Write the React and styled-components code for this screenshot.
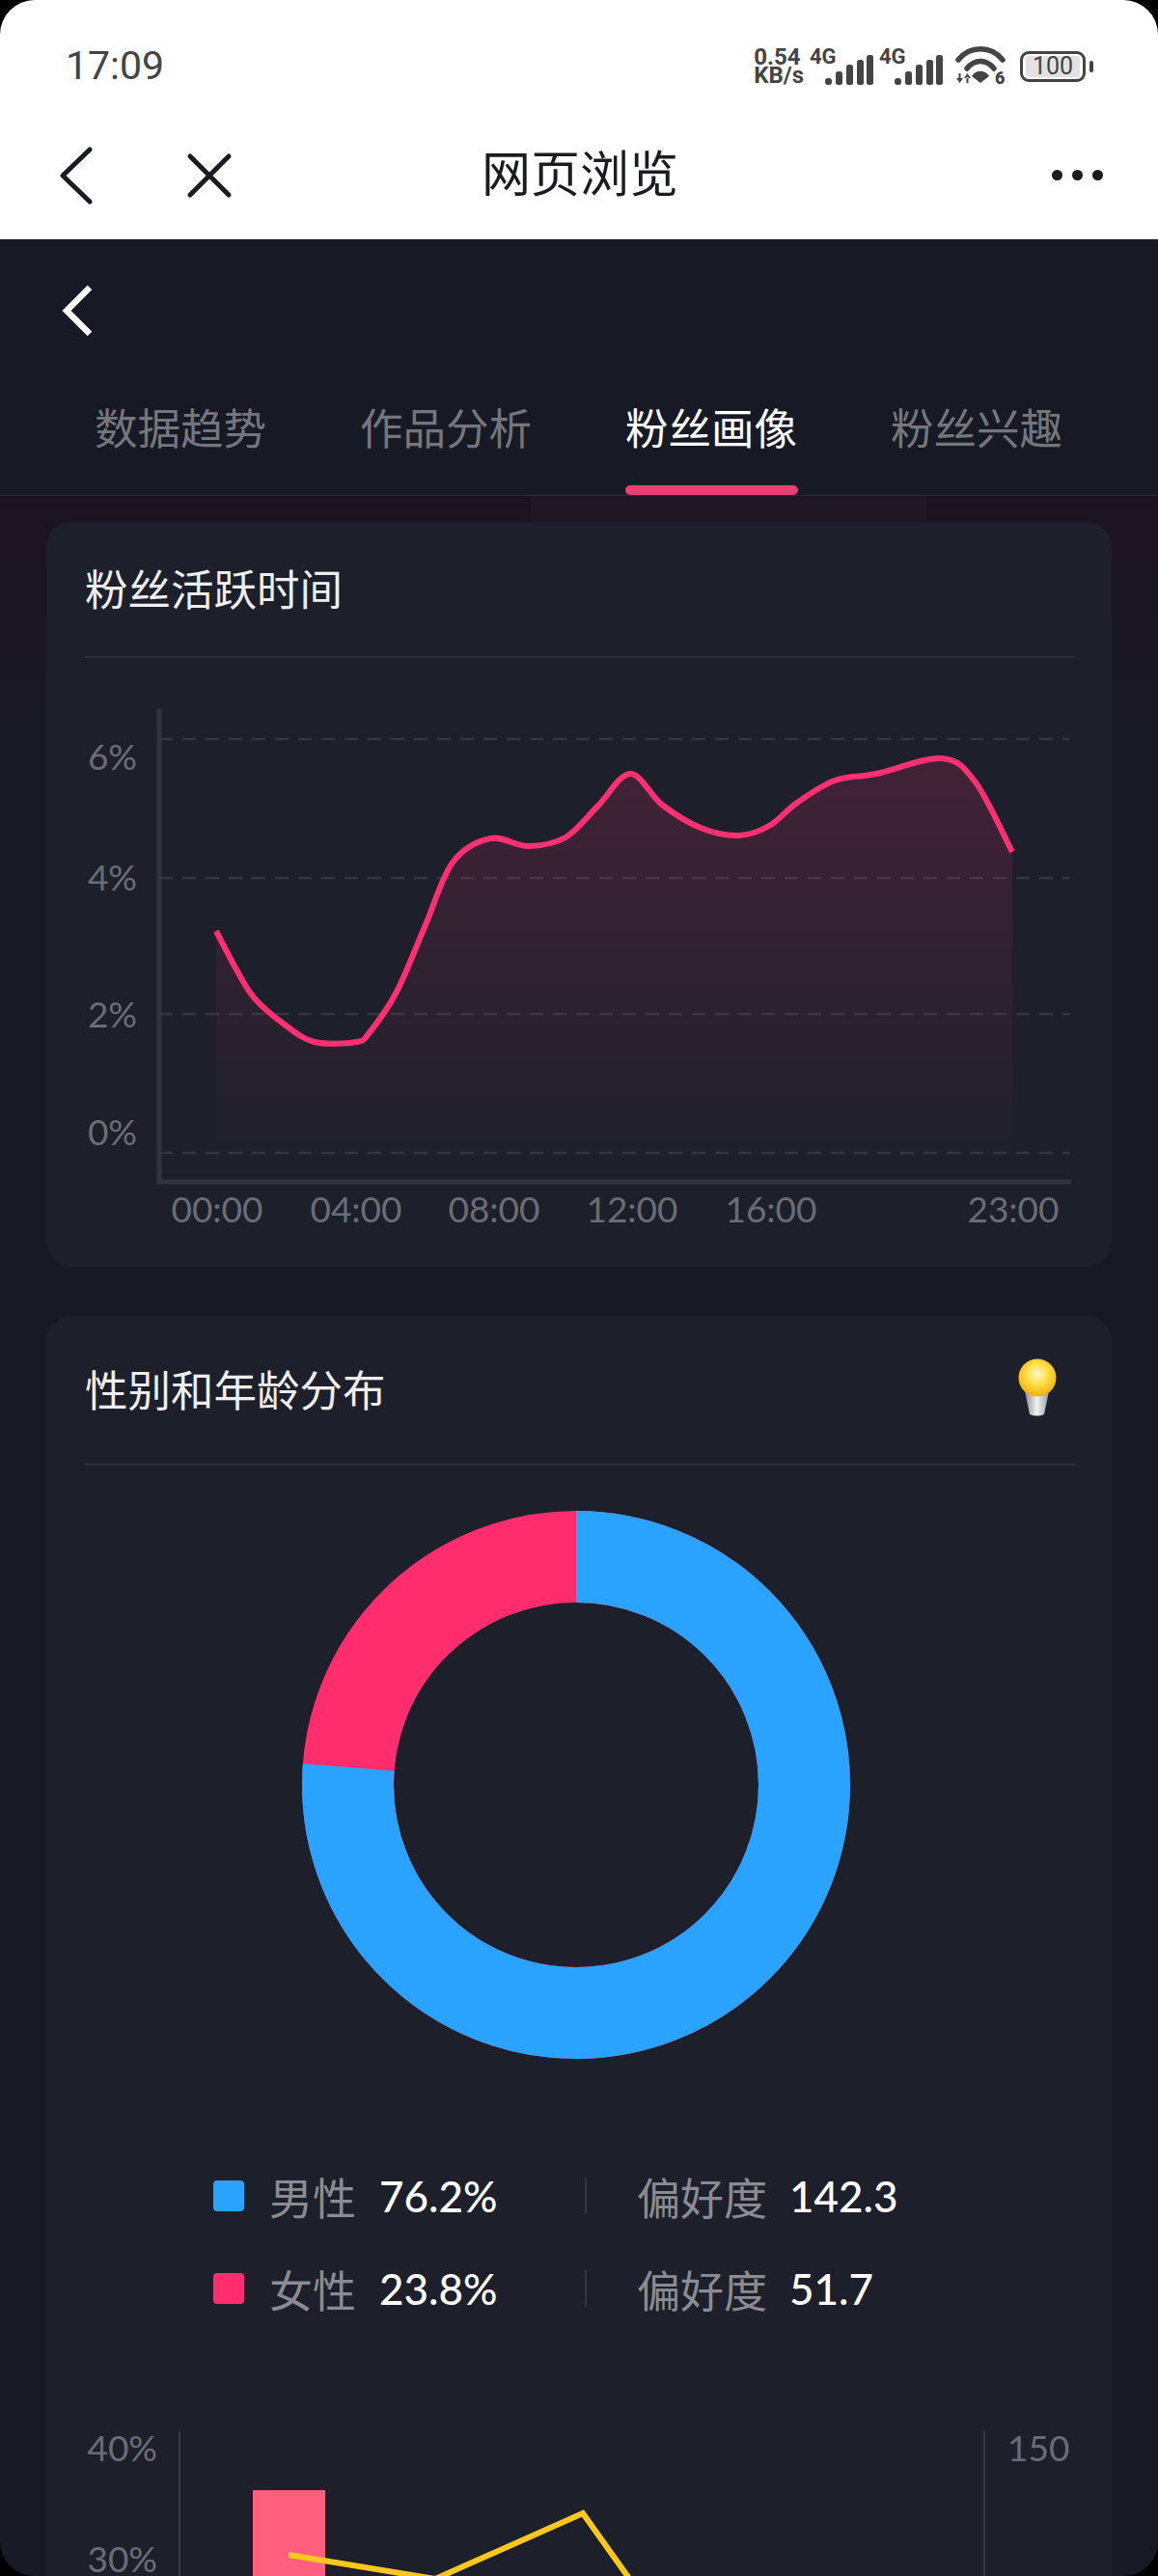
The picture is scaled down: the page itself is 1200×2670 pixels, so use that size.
import React from 'react'
import styled, { createGlobalStyle } from 'styled-components'

const FONT = `Lato, "Noto Sans CJK SC", "Noto Sans", sans-serif`

const GlobalStyle = createGlobalStyle`
    html, body {
        margin: 0;
        padding: 0;
        background: #000;
        font-family: ${FONT};
    }
`

const curvePoints = [
    [224, 965], [245, 1005], [264, 1035], [295, 1062], [326, 1080], [369, 1080], [383, 1070],
    [411, 1028], [440, 961], [469, 894], [508, 869], [547, 877], [586, 868],
    [619, 836], [653, 802], [686, 834], [726, 858], [765, 866], [797, 856],
    [826, 832], [865, 809], [908, 802], [976, 786], [1011, 811], [1049, 883],
]

// catmull-rom to bezier so the line stays smooth through every point
const smoothPath = (pts) => {
    let d = `M${pts[0][0]} ${pts[0][1]}`
    for (let i = 0; i < pts.length - 1; i++) {
        const p0 = pts[i - 1] || pts[i]
        const p1 = pts[i]
        const p2 = pts[i + 1]
        const p3 = pts[i + 2] || p2
        const c1x = p1[0] + (p2[0] - p0[0]) / 6
        const c1y = p1[1] + (p2[1] - p0[1]) / 6
        const c2x = p2[0] - (p3[0] - p1[0]) / 6
        const c2y = p2[1] - (p3[1] - p1[1]) / 6
        d += ` C${c1x} ${c1y} ${c2x} ${c2y} ${p2[0]} ${p2[1]}`
    }
    return d
}

const linePath = smoothPath(curvePoints)
const gridLines = [766, 910, 1051, 1195]
const yLabels = [['6%', 785], ['4%', 910], ['2%', 1052], ['0%', 1174]]
const xLabels = [['00:00', 225], ['04:00', 369], ['08:00', 512], ['12:00', 655], ['16:00', 799], ['23:00', 1050]]
const tabs = ['数据趋势', '作品分析', '粉丝画像', '粉丝兴趣']
const legendRows = [
    { color: '#2aa2ff', name: '男性', share: '76.2%', score: '142.3' },
    { color: '#ff2d6e', name: '女性', share: '23.8%', score: '51.7' },
]

function SignalIcon() {
    return (
        <svg width="50" height="31" viewBox="0 0 50 31" fill="#444">
            <rect x="0" y="24" width="7" height="7" rx="3" />
            <rect x="11" y="17" width="7" height="14" rx="2.5" />
            <rect x="22" y="10" width="7" height="21" rx="2.5" />
            <rect x="33" y="5" width="7" height="26" rx="2.5" />
            <rect x="43" y="0" width="7" height="31" rx="2.5" />
        </svg>
    )
}

function WifiIcon() {
    return (
        <WifiSvg width="52" height="40" viewBox="0 0 52 40" fill="none">
            <path d="M3 14 C15 -1 37 -1 49 14" stroke="#444" strokeWidth="5.5" strokeLinecap="round" />
            <path d="M12 23 C20 13 32 13 40 23" stroke="#444" strokeWidth="5.5" strokeLinecap="round" />
            <path d="M17 31 C21 24 31 24 35 31 L26 38 Z" fill="#444" />
            <path d="M1 33 H8 L4.5 38 Z M3.5 28 H5.5 V34 H3.5 Z" fill="#444" />
            <path d="M9 33 H16 L12.5 28 Z M11.5 32 H13.5 V38 H11.5 Z" fill="#444" />
            <text x="41" y="39" fontSize="18" fontWeight="900" fill="#444" fontFamily="Roboto, sans-serif">6</text>
        </WifiSvg>
    )
}

function BulbIcon() {
    return (
        <BulbSvg width="50" height="64" viewBox="0 0 50 64">
            <defs>
                <radialGradient id="globe" cx="0.5" cy="0.4" r="0.6">
                    <stop offset="0" stopColor="#fff8d0" />
                    <stop offset="0.45" stopColor="#ffe04a" />
                    <stop offset="1" stopColor="#f0ae10" />
                </radialGradient>
                <linearGradient id="base" x1="0" x2="1" y1="0" y2="0">
                    <stop offset="0" stopColor="#8d8d8f" />
                    <stop offset="0.5" stopColor="#f2f2f2" />
                    <stop offset="1" stopColor="#9a9a9c" />
                </linearGradient>
            </defs>
            <path d="M12 34 L37 34 L32 58 Q25 61 17 58 Z" fill="url(#base)" />
            <circle cx="25" cy="20" r="19.5" fill="url(#globe)" />
        </BulbSvg>
    )
}

function ActiveChart() {
    const areaPath = `${linePath} L1049 1195 L224 1195 Z`
    return (
        <ChartSvg width="1104" height="631" viewBox="48 682 1104 631">
            <defs>
                <linearGradient id="area" gradientUnits="userSpaceOnUse" x1="0" x2="0" y1="786" y2="1195">
                    <stop offset="0" stopColor="#ff2d6e" stopOpacity="0.16" />
                    <stop offset="1" stopColor="#ff2d6e" stopOpacity="0.01" />
                </linearGradient>
            </defs>
            {gridLines.map((y) => (
                <line key={y} x1="165" x2="1109" y1={y} y2={y} stroke="#33363f" strokeWidth="2.5" strokeDasharray="14 10" />
            ))}
            <path d={areaPath} fill="url(#area)" />
            <path d={linePath} fill="none" stroke="#ff3072" strokeWidth="6" strokeLinejoin="round" />
            <path d="M165 735 V1225 H1110" fill="none" stroke="#31343e" strokeWidth="5" />
            {yLabels.map(([t, y]) => (
                <AxisText key={t} x="142" y={y + 13} textAnchor="end">{t}</AxisText>
            ))}
            {xLabels.map(([t, x]) => (
                <AxisText key={t} x={x} y="1267" textAnchor="middle">{t}</AxisText>
            ))}
        </ChartSvg>
    )
}

function Donut() {
    const r = 236.5
    const c = 2 * Math.PI * r
    const male = c * 0.762
    return (
        <DonutBox width="568" height="568" viewBox="0 0 568 568">
            <circle cx="284" cy="284" r={r} fill="none" stroke="#ff2d6e" strokeWidth="95" />
            <circle
                cx="284" cy="284" r={r} fill="none" stroke="#2aa2ff" strokeWidth="95"
                strokeDasharray={`${male} ${c - male}`}
                transform="rotate(-90 284 284)"
            />
        </DonutBox>
    )
}

function AgeChart() {
    return (
        <ChartSvg width="1104" height="220" viewBox="48 2520 1104 220">
            <line x1="186" x2="186" y1="2520" y2="2740" stroke="#373a44" strokeWidth="2" />
            <line x1="1020" x2="1020" y1="2520" y2="2740" stroke="#373a44" strokeWidth="2" />
            <rect x="262" y="2581" width="75" height="159" fill="#ff5f7e" />
            <polyline points="299,2648 451,2673 604,2605 700,2740" fill="none" stroke="#fdc81e" strokeWidth="6" />
            <AxisText x="163" y="2551" textAnchor="end">40%</AxisText>
            <AxisText x="163" y="2666" textAnchor="end">30%</AxisText>
            <AxisText x="1044" y="2551">150</AxisText>
        </ChartSvg>
    )
}

function App() {
    return (
        <Page>
            <GlobalStyle />
            <WhiteHead>
                <StatusBar>
                    <Clock>17:09</Clock>
                    <StatusIcons>
                        <Speed><span>0.54</span><span>KB/s</span></Speed>
                        <Network>
                            <NetLabel>4G</NetLabel>
                            <SignalIcon />
                        </Network>
                        <Network>
                            <NetLabel>4G</NetLabel>
                            <SignalIcon />
                        </Network>
                        <WifiIcon />
                        <Battery>
                            <BatteryBody><BatteryLevel>100</BatteryLevel></BatteryBody>
                            <BatteryNub />
                        </Battery>
                    </StatusIcons>
                </StatusBar>
                <NavBar>
                    <NavLeft>
                        <svg width="36" height="60" viewBox="0 0 36 60" fill="none">
                            <path d="M32 3 L4 30 L32 57" stroke="#1b1c22" strokeWidth="5" strokeLinecap="round" strokeLinejoin="round" />
                        </svg>
                        <svg width="50" height="50" viewBox="0 0 50 50" fill="none">
                            <path d="M5 5 L45 45 M45 5 L5 45" stroke="#1b1c22" strokeWidth="5" strokeLinecap="round" />
                        </svg>
                    </NavLeft>
                    <NavTitle>网页浏览</NavTitle>
                    <NavRight>
                        <Dot /><Dot /><Dot />
                    </NavRight>
                </NavBar>
            </WhiteHead>
            <DarkHead>
                <BackRow>
                    <svg width="34" height="54" viewBox="0 0 34 54" fill="none">
                        <path d="M29 3 L5 27 L29 51" stroke="#fff" strokeWidth="6.5" strokeLinejoin="miter" />
                    </svg>
                </BackRow>
                <TabRow>
                    {tabs.map((t, i) => (
                        <Tab key={t}>
                            <TabLabel $active={i === 2}>{t}</TabLabel>
                            <TabBar $active={i === 2} />
                        </Tab>
                    ))}
                </TabRow>
            </DarkHead>
            <Content>
                <Card>
                    <CardHead $height={141}>
                        <CardTitle>粉丝活跃时间</CardTitle>
                    </CardHead>
                    <ActiveChart />
                </Card>
                <Card>
                    <CardHead $height={155}>
                        <CardTitle>性别和年龄分布</CardTitle>
                        <BulbIcon />
                    </CardHead>
                    <Donut />
                    <Legend>
                        {legendRows.map((row) => (
                            <LegendRow key={row.name}>
                                <Swatch $color={row.color} />
                                <LegendLabel>{row.name}</LegendLabel>
                                <LegendValue>{row.share}</LegendValue>
                                <LegendDivider />
                                <LegendLabel>偏好度</LegendLabel>
                                <LegendValue>{row.score}</LegendValue>
                            </LegendRow>
                        ))}
                    </Legend>
                    <AgeChart />
                </Card>
            </Content>
        </Page>
    )
}

const Page = styled.div`
    width: 1200px;
    height: 2670px;
    overflow: hidden;
    border-radius: 36px;
    background: #171a24;
    color: #fff;
`
const WhiteHead = styled.header`
    height: 248px;
    background: #fff;
    color: #1b1c22;
`
const StatusBar = styled.div`
    height: 136px;
    padding: 0 67px 0 68px;
    box-sizing: border-box;
    display: flex;
    align-items: center;
    justify-content: space-between;
`
const Clock = styled.div`
    font-family: Roboto, sans-serif;
    font-size: 41px;
    color: #444;
`
const StatusIcons = styled.div`
    display: flex;
    align-items: flex-end;
    gap: 6px;
`
const Speed = styled.div`
    display: flex;
    flex-direction: column;
    font-family: Roboto, sans-serif;
    font-size: 24px;
    line-height: 19px;
    font-weight: 700;
    color: #444;
`
const Network = styled.div`
    position: relative;
    display: flex;
    align-items: flex-end;
    padding-left: 16px;
    height: 36px;
`
const NetLabel = styled.span`
    position: absolute;
    left: 0;
    top: -4px;
    font-family: Roboto, sans-serif;
    font-size: 22px;
    line-height: 22px;
    font-weight: 700;
    color: #444;
`
const WifiSvg = styled.svg`
    margin-left: 7px;
    overflow: visible;
`
const Battery = styled.div`
    display: flex;
    align-items: center;
    gap: 4px;
    margin-left: 9px;
    margin-bottom: 3px;
`
const BatteryBody = styled.div`
    width: 68px;
    height: 32px;
    box-sizing: border-box;
    border: 3px solid #444;
    border-radius: 9px;
    padding: 2px 3px;
`
const BatteryLevel = styled.div`
    height: 100%;
    background: #e2e2e2;
    border-radius: 3px;
    font-family: Roboto, sans-serif;
    font-size: 25px;
    line-height: 22px;
    text-align: center;
    color: #444;
`
const BatteryNub = styled.div`
    width: 4px;
    height: 12px;
    border-radius: 2px;
    background: #444;
`
const NavBar = styled.nav`
    height: 88px;
    padding: 0 57px 0 61px;
    display: grid;
    grid-template-columns: 1fr auto 1fr;
    align-items: center;
`
const NavLeft = styled.div`
    display: flex;
    align-items: center;
    gap: 95px;
    margin-top: 3px;
`
const NavTitle = styled.h1`
    margin: -6px 2px 0 0;
    font-size: 51px;
    font-weight: 400;
    color: #1b1c22;
`
const NavRight = styled.div`
    display: flex;
    justify-content: flex-end;
    gap: 10px;
    margin-top: 3px;
`
const Dot = styled.span`
    width: 11px;
    height: 11px;
    border-radius: 50%;
    background: #1b1c22;
`
const DarkHead = styled.div`
    height: 265px;
    border-bottom: 1px solid #2c2a36;
`
const BackRow = styled.div`
    height: 144px;
    padding: 3px 0 0 64px;
    box-sizing: border-box;
    display: flex;
    align-items: center;
`
const TabRow = styled.div`
    display: flex;
    gap: 96px;
    padding-left: 98px;
`
const Tab = styled.div`
    display: flex;
    flex-direction: column;
    width: 179px;
`
const TabLabel = styled.div`
    font-size: 44.5px;
    line-height: 104px;
    height: 111px;
    white-space: nowrap;
    color: ${(p) => (p.$active ? '#fff' : '#75767d')};
`
const TabBar = styled.div`
    height: 10px;
    border-radius: 5px;
    background: ${(p) => (p.$active ? '#e93f72' : 'transparent')};
`
const Content = styled.main`
    padding: 27px 48px 0;
    display: flex;
    flex-direction: column;
    gap: 51px;
    background:
        linear-gradient(#1f1723, #1f1723) 550px 0 / 410px 27px no-repeat,
        linear-gradient(180deg, #1c1320 0, #171a24 320px);
`
const Card = styled.section`
    width: 1104px;
    background: #1d202b;
    border-radius: 26px;
`
const CardHead = styled.div`
    height: ${(p) => p.$height}px;
    margin: 0 38px 0 40px;
    padding: 0 14px 4px 0;
    box-sizing: border-box;
    border-bottom: 2px solid #2c2f39;
    display: flex;
    align-items: center;
    justify-content: space-between;
`
const CardTitle = styled.h2`
    margin: 0;
    font-size: 44.5px;
    font-weight: 400;
    color: #eeeeef;
`
const BulbSvg = styled.svg`
    margin-top: 2px;
`
const ChartSvg = styled.svg`
    display: block;
    overflow: visible;
`
const AxisText = styled.text`
    font-family: Lato, sans-serif;
    font-size: 37px;
    font-weight: 400;
    fill: #6b6d74;
`
const DonutBox = styled.svg`
    display: block;
    margin: 47px 0 0 265px;
`
const Legend = styled.div`
    margin-top: 94px;
    padding-left: 173px;
    margin-bottom: 100px;
`
const LegendRow = styled.div`
    display: grid;
    grid-template-columns: 58px 114px 213px 54px 158px auto;
    align-items: center;
    height: 96px;
`
const Swatch = styled.span`
    width: 32px;
    height: 32px;
    border-radius: 4px;
    background: ${(p) => p.$color};
`
const LegendLabel = styled.span`
    font-size: 45px;
    color: #8b8c93;
    white-space: nowrap;
`
const LegendValue = styled.span`
    font-size: 44px;
    font-weight: 500;
    color: #fff;
`
const LegendDivider = styled.span`
    width: 2px;
    height: 38px;
    background: #33363f;
`

export default App
